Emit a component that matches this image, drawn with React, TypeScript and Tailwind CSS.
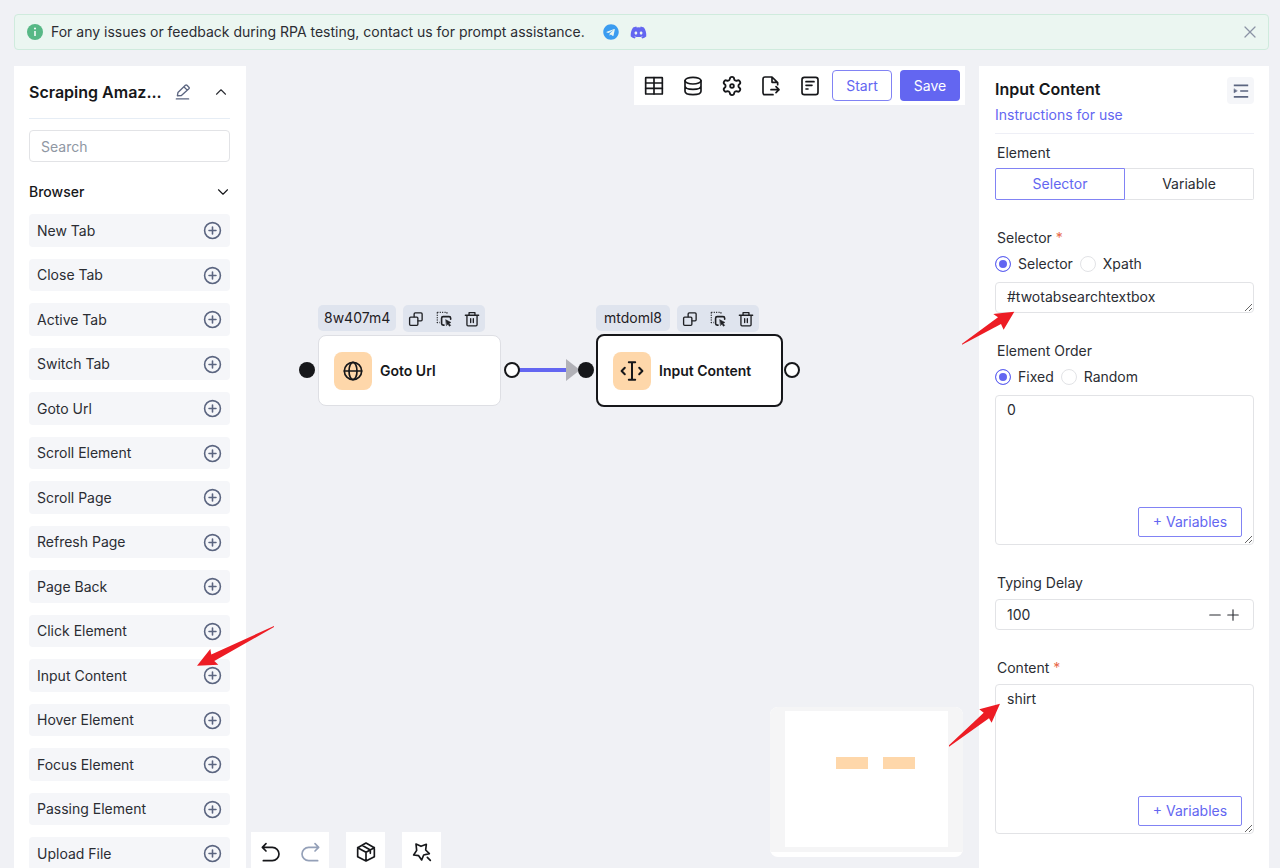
import React, { useState } from 'react';
import { ChevronDown, ChevronUp, Minus, Plus, X } from 'lucide-react';
import { FaTelegram, FaDiscord } from 'react-icons/fa';

const ACTIONS = [
  'New Tab',
  'Close Tab',
  'Active Tab',
  'Switch Tab',
  'Goto Url',
  'Scroll Element',
  'Scroll Page',
  'Refresh Page',
  'Page Back',
  'Click Element',
  'Input Content',
  'Hover Element',
  'Focus Element',
  'Passing Element',
  'Upload File',
];

interface IconProps {
  className?: string;
  strokeWidth?: number;
  children: React.ReactNode;
}

// All hand drawn icons share a 60 unit grid
const Icon: React.FC<IconProps> = ({ className = 'size-5', strokeWidth = 5, children }) => (
  <svg
    viewBox="0 0 60 60"
    className={className}
    fill="none"
    stroke="currentColor"
    strokeWidth={strokeWidth}
    strokeLinecap="round"
    strokeLinejoin="round"
    aria-hidden="true"
  >
    {children}
  </svg>
);

const TableIcon = () => (
  <Icon>
    <rect x="5" y="5" width="50" height="49" rx="1" />
    <path d="M5 21h50M5 37h50M30 5v49" />
  </Icon>
);

const DatabaseIcon = () => (
  <Icon>
    <ellipse cx="30" cy="14" rx="24" ry="10" />
    <path d="M6 14v32c0 6 11 10 24 10s24-4 24-10V14M6 30c0 6 11 10 24 10s24-4 24-10" />
  </Icon>
);

const GearIcon = () => (
  <svg viewBox="0 0 24 24" className="size-[22px]" fill="none" stroke="currentColor" strokeWidth="2" aria-hidden="true">
    <path d="M9.671 4.136a2.34 2.34 0 0 1 4.659 0 2.34 2.34 0 0 0 3.319 1.915 2.34 2.34 0 0 1 2.33 4.033 2.34 2.34 0 0 0 0 3.831 2.34 2.34 0 0 1-2.33 4.033 2.34 2.34 0 0 0-3.319 1.915 2.34 2.34 0 0 1-4.659 0 2.34 2.34 0 0 0-3.32-1.915 2.34 2.34 0 0 1-2.33-4.033 2.34 2.34 0 0 0 0-3.831A2.34 2.34 0 0 1 6.35 6.051a2.34 2.34 0 0 0 3.319-1.915" />
    <circle cx="12" cy="12" r="2" />
  </svg>
);

const ExportIcon = () => (
  <Icon>
    <path d="M36 56H12q-6 0-6-6V9q0-6 6-6h21l17 17v6M33 4v15h16M30 41h24M45 32l9 9-9 9" />
  </Icon>
);

const NoteIcon = () => (
  <Icon>
    <rect x="6" y="4" width="48" height="52" rx="7" />
    <path d="M18 17h24M18 28h18M18 39h6" />
  </Icon>
);

const UndoIcon = () => (
  <Icon>
    <path d="M15 5L4 16l11 11M5 16h29a20 20 0 0 1 0 40H7" />
  </Icon>
);

const RedoIcon = () => (
  <Icon>
    <path d="M45 5l11 11-11 11M55 16H26a20 20 0 0 0 0 40h27" />
  </Icon>
);

const BoxIcon = () => (
  <Icon>
    <path d="M30 3l25 14v27L30 57 5 44V17zM5 17l25 14 25-14M30 31v26M18 10l25 14v10" />
  </Icon>
);

const WandIcon = () => (
  <Icon>
    <path d="M12 6l15 7 16-6-2 17 11 11-17 4-6 15-9-13-15-2 9-14zM46 46l9 9" />
  </Icon>
);

const GlobeIcon = () => (
  <Icon>
    <circle cx="30" cy="30" r="26" />
    <ellipse cx="30" cy="30" rx="12" ry="26" />
    <path d="M4 30h52" />
  </Icon>
);

const TextCursorIcon = () => (
  <Icon className="size-6" strokeWidth={5}>
    <path d="M30 8v44M22 8h16M22 52h16M12 22l-8 8 8 8M48 22l8 8-8 8" />
  </Icon>
);

const CopyIcon = () => (
  <Icon className="size-4" strokeWidth={5}>
    <rect x="6" y="23" width="31" height="31" rx="4" />
    <path d="M23 22V11q0-4 4-4h22q4 0 4 4v22q0 4-4 4H38" />
  </Icon>
);

const SelectIcon = () => (
  <Icon className="size-4" strokeWidth={5}>
    <path d="M5 5h36v9M5 5v38h9" strokeDasharray="4 5" strokeLinecap="butt" />
    <path d="M30 53h-3q-6 0-6-6V27q0-6 6-6h22q6 0 6 6v4" strokeWidth="6" />
    <path d="M37 33l19 10-7 3 6 8-5 3-5-8-5 5z" fill="currentColor" strokeWidth="2" />
  </Icon>
);

const TrashIcon = () => (
  <Icon className="size-4" strokeWidth={5}>
    <path d="M5 16h50M19 15V6h22v9M11 17v35q0 4 4 4h30q4 0 4-4V17M25 29v14M35 29v14" />
  </Icon>
);

const PencilIcon = () => (
  <Icon className="size-4" strokeWidth={5}>
    <path d="M5 56h46M9 44l2-12L39 5q3-3 6 0l7 7q3 3 0 6L24 43zM34 11l12 12" />
  </Icon>
);

const AddIcon = () => (
  <Icon className="size-[19px]" strokeWidth={5}>
    <circle cx="30" cy="30" r="25" />
    <path d="M30 19v22M19 30h22" />
  </Icon>
);

const IndentIcon = () => (
  <Icon className="size-4" strokeWidth={6}>
    <path d="M3 9h54M27 30h30M3 52h54" strokeLinecap="butt" />
    <path d="M4 23v14l11-7z" fill="currentColor" strokeWidth="2" />
  </Icon>
);

interface FlowNodeProps {
  id: string;
  title: string;
  icon: React.ReactNode;
  selected?: boolean;
  className: string;
}

const FlowNode: React.FC<FlowNodeProps> = ({ id, title, icon, selected, className }) => (
  <div className={`absolute ${className}`}>
    <div className="flex w-max gap-[7px] text-[#1f2024]">
      <span className="flex h-[26px] min-w-[74px] items-center justify-center rounded-[5px] bg-[#dfe4ee] px-1.5 text-sm">
        {id}
      </span>
      <div className="flex h-[27px] items-center gap-3 rounded-[5px] bg-[#dfe4ee] px-[5px]">
        <button type="button" aria-label="Copy node"><CopyIcon /></button>
        <button type="button" aria-label="Select node"><SelectIcon /></button>
        <button type="button" aria-label="Delete node"><TrashIcon /></button>
      </div>
    </div>
    <div
      className={
        selected
          ? 'mt-0.5 flex h-[73px] w-[187px] items-center gap-2 rounded-lg border-2 border-[#16171a] bg-white pl-[15px]'
          : 'mt-[3px] flex h-[71px] w-[183px] items-center gap-2 rounded-lg border border-[#dedfe4] bg-white pl-[15px]'
      }
    >
      <span className="flex size-[38px] items-center justify-center rounded-lg bg-[#fed7aa] text-[#16171a]">{icon}</span>
      <span className="text-sm font-semibold text-[#16171a]">{title}</span>
    </div>
  </div>
);

interface RadioPairProps {
  name: string;
  options: string[];
}

const RadioPair: React.FC<RadioPairProps> = ({ name, options }) => {
  const [value, setValue] = useState(options[0]);

  return (
    <div className="mt-1.5 flex h-5 items-center gap-[7px]">
      {options.map((option) => (
        <label key={option} className="flex items-center gap-[7px]">
          <input
            type="radio"
            name={name}
            checked={value === option}
            onChange={() => setValue(option)}
            className="size-4 appearance-none rounded-full border border-[#e2e3e6] bg-white checked:border-[#6366f1] checked:bg-[#6366f1] checked:shadow-[inset_0_0_0_3px_#fff]"
          />
          {option}
        </label>
      ))}
    </div>
  );
};

const VariableTextarea: React.FC<{ id: string; text: string }> = ({ id, text }) => (
  <div className="relative">
    <textarea
      id={id}
      defaultValue={text}
      className="block h-[150px] w-full rounded-sm border border-[#e2e3e6] px-[11px] py-1 leading-5 outline-none"
    />
    <button
      type="button"
      className="absolute right-3 bottom-2 h-[30px] w-[104px] rounded-xs border border-[#8183f4] bg-white text-[#6366f1]"
    >
      + Variables
    </button>
  </div>
);

const Sidebar = () => (
  <aside className="w-[232px] shrink-0 overflow-hidden bg-white pr-4 pl-[15px] text-[#2b2d33]">
    <div className="flex h-[53px] items-center border-b border-[#e6edf5]">
      <h1 className="w-[132px] text-base font-semibold whitespace-nowrap text-[#16171a]">Scraping Amaz...</h1>
      <button type="button" aria-label="Rename" className="ml-3.5 text-[#5b6580]">
        <PencilIcon />
      </button>
      <button type="button" aria-label="Collapse" className="ml-auto text-[#2b2d33]">
        <ChevronUp className="size-[18px]" strokeWidth={1.5} />
      </button>
    </div>
    <input
      type="text"
      aria-label="Search"
      placeholder="Search"
      className="mt-[11px] block h-8 w-full rounded-sm border border-[#e2e3e6] px-[11px] outline-none placeholder:text-[#8f97a3]"
    />
    <button type="button" className="mt-5 flex h-5 w-full items-center justify-between text-sm font-medium text-[#16171a]">
      Browser
      <ChevronDown className="-mr-0.5 size-[18px]" strokeWidth={1.5} />
    </button>
    <ul className="mt-3 flex flex-col gap-3">
      {ACTIONS.map((action) => (
        <li
          key={action}
          className="flex shrink-0 items-center justify-between rounded bg-[#f5f6f9] px-2 odd:h-[33px] even:h-8"
        >
          {action}
          <button type="button" aria-label={`Add ${action}`} className="text-[#5b6580]">
            <AddIcon />
          </button>
        </li>
      ))}
    </ul>
  </aside>
);

const Toolbar = () => (
  <div className="relative mr-3.5 ml-auto flex h-[39px] w-max items-center bg-white pr-[5px] text-[#16171a]">
    <button type="button" aria-label="Table" className="flex w-[39px] justify-center"><TableIcon /></button>
    <button type="button" aria-label="Data" className="flex w-[39px] justify-center"><DatabaseIcon /></button>
    <button type="button" aria-label="Settings" className="flex w-[39px] justify-center"><GearIcon /></button>
    <button type="button" aria-label="Export" className="flex w-[39px] justify-center"><ExportIcon /></button>
    <button type="button" aria-label="Log" className="flex w-[39px] justify-center"><NoteIcon /></button>
    <button type="button" className="ml-[3px] h-[31px] w-[60px] rounded border border-[#8183f4] text-[#6366f1]">Start</button>
    <button type="button" className="ml-2 h-[31px] w-[60px] rounded bg-[#6366f1] text-white">Save</button>
  </div>
);

const Canvas = () => (
  <main className="relative min-w-0 flex-1 overflow-hidden">
    <FlowNode id="8w407m4" title="Goto Url" icon={<GlobeIcon />} className="top-[239px] left-[72px]" />
    <svg className="absolute top-[290px] left-[50px] h-[28px] w-[512px]" viewBox="0 0 512 28" aria-hidden="true">
      <path d="M216 14h58" stroke="#6366f1" strokeWidth="4" />
      <path d="M270 3l14 11-14 11z" fill="#b1b1b7" />
      <circle cx="11" cy="14" r="8" fill="#16171a" />
      <circle cx="216" cy="14" r="7" fill="#fff" stroke="#16171a" strokeWidth="2" />
      <circle cx="290" cy="14" r="8" fill="#16171a" />
      <circle cx="496" cy="14" r="7" fill="#fff" stroke="#16171a" strokeWidth="2" />
    </svg>
    <FlowNode id="mtdoml8" title="Input Content" icon={<TextCursorIcon />} selected className="top-[239px] left-[350px]" />

    <Toolbar />

    <div className="absolute -bottom-[3px] left-[5px] flex h-[39px] gap-[17px] text-[#16171a]">
      <div className="flex bg-white">
        <button type="button" aria-label="Undo" className="flex w-[39px] items-center justify-center"><UndoIcon /></button>
        <button type="button" aria-label="Redo" className="flex w-[39px] items-center justify-center text-[#94a0b8]"><RedoIcon /></button>
      </div>
      <button type="button" aria-label="Modules" className="flex w-[39px] items-center justify-center bg-white"><BoxIcon /></button>
      <button type="button" aria-label="Arrange" className="flex w-[39px] items-center justify-center bg-white"><WandIcon /></button>
    </div>

    {/* Minimap */}
    <div className="absolute right-4 bottom-[11px] h-[150px] w-[193px] overflow-hidden rounded-lg bg-white">
      <svg viewBox="0 0 193 145" className="block h-[145px] w-full" aria-hidden="true">
        <rect width="193" height="145" fill="#f5f5f6" />
        <rect x="15" y="4" width="163" height="136" fill="#fff" />
        <rect x="66" y="50" width="32" height="12" fill="#fed7aa" />
        <rect x="113" y="50" width="32" height="12" fill="#fed7aa" />
      </svg>
    </div>
  </main>
);

const Inspector = () => (
  <aside className="relative w-[290px] shrink-0 bg-white pt-[11px] pr-[15px] pl-4 text-[#2b2d33]">
    <header className="flex items-start justify-between border-b border-[#eeeff6] pb-1.5">
      <div>
        <h2 className="text-base leading-6 font-semibold text-[#16171a]">Input Content</h2>
        <a href="#instructions" className="mt-0.5 block h-6 leading-6 text-[#6366f1]">Instructions for use</a>
      </div>
      <button
        type="button"
        aria-label="Collapse panel"
        className="flex size-[27px] items-center justify-center rounded-sm bg-[#f5f6f9] text-[#5b6580]"
      >
        <IndentIcon />
      </button>
    </header>

    <form className="mt-[9px] flex flex-col gap-7 leading-5">
      <div>
        <p className="pl-0.5">Element</p>
        <div className="mt-[5px] flex h-8">
          <button type="button" className="flex-1 rounded-l-xs border border-[#8183f4] text-[#6366f1]">Selector</button>
          <button type="button" className="flex-1 rounded-r-xs border border-l-0 border-[#e2e3e6]">Variable</button>
        </div>
      </div>

      <div>
        <label htmlFor="selector" className="block pl-0.5">
          Selector <span className="text-[#e8684a]">*</span>
        </label>
        <RadioPair name="selector-type" options={['Selector', 'Xpath']} />
        <textarea
          id="selector"
          rows={1}
          defaultValue="#twotabsearchtextbox"
          className="mt-2 block h-[31px] w-full overflow-hidden rounded-sm border border-[#e2e3e6] px-[11px] py-1 leading-5 outline-none"
        />
      </div>

      <div>
        <label htmlFor="order" className="mb-1.5 block pl-0.5">Element Order</label>
        <RadioPair name="order-type" options={['Fixed', 'Random']} />
        <div className="mt-2">
          <VariableTextarea id="order" text="0" />
        </div>
      </div>

      <div>
        <label htmlFor="delay" className="block pl-0.5">Typing Delay</label>
        <div className="mt-1.5 flex h-[31px] items-center rounded-sm border border-[#e2e3e6] px-[11px]">
          <input id="delay" type="text" defaultValue="100" className="min-w-0 flex-1 outline-none" />
          <button type="button" aria-label="Decrease"><Minus className="size-[18px]" strokeWidth={1.5} /></button>
          <button type="button" aria-label="Increase"><Plus className="size-[18px]" strokeWidth={1.5} /></button>
        </div>
      </div>

      <div>
        <label htmlFor="content" className="mb-1.5 block pl-0.5">
          Content <span className="text-[#e8684a]">*</span>
        </label>
        <VariableTextarea id="content" text="shirt" />
      </div>
    </form>

    {/* Pointers to the fields that need a value */}
    <svg viewBox="0 0 53 34" className="absolute top-[245px] -left-[17px] h-[34px] w-[53px]" aria-hidden="true">
      <path d="M52.300 .7L31.300 3l4.700 3.300L0 32.700v1L39 13l2.600 5.700z" fill="#ed1c24" />
    </svg>
    <svg viewBox="0 0 51 44" className="absolute top-[637px] -left-[30px] h-[44px] w-[51px]" aria-hidden="true">
      <path d="M51 .7L30.300 6.300l4.400 3.400L0 42.300v1.400L40 15.300l2.600 4.400z" fill="#ed1c24" />
    </svg>
  </aside>
);

const App = () => (
  <div className="relative flex h-screen flex-col overflow-hidden bg-[#f0f1f5] pt-3.5 pr-[11px] pl-3.5 font-['Inter',sans-serif] text-sm">
    <div role="status" className="flex h-9 shrink-0 items-center rounded border border-[#cfebdd] bg-[#ebf6f1] px-3 text-[#2b2d33]">
      <svg viewBox="0 0 16 16" className="mr-2 size-4" aria-hidden="true">
        <circle cx="8" cy="8" r="8" fill="#57b886" />
        <circle cx="8" cy="4.500" r="1" fill="#fff" />
        <path d="M8 7v5" stroke="#fff" strokeWidth="1.500" />
      </svg>
      <span>For any issues or feedback during RPA testing, contact us for prompt assistance.</span>
      <a href="#telegram" aria-label="Telegram" className="ml-[18px] rounded-full text-[#3b9cf0]"><FaTelegram className="size-4" /></a>
      <a href="#discord" aria-label="Discord" className="ml-[11px] text-[#6366f1]"><FaDiscord className="size-[17px]" /></a>
      <button type="button" aria-label="Close" className="-mr-1 ml-auto text-[#8b93a5]">
        <X className="size-5" strokeWidth={1.5} />
      </button>
    </div>

    <div className="mt-4 flex min-h-0 flex-1">
      <Sidebar />
      <Canvas />
      <Inspector />
    </div>

    <svg viewBox="0 0 78 41" className="absolute top-[626px] left-[197px] h-[41px] w-[78px]" aria-hidden="true">
      <path d="M0 39.700L13.300 23l1 5.600L77 0v1L17.300 35l4 3.700z" fill="#ed1c24" />
    </svg>
  </div>
);

export default App;
